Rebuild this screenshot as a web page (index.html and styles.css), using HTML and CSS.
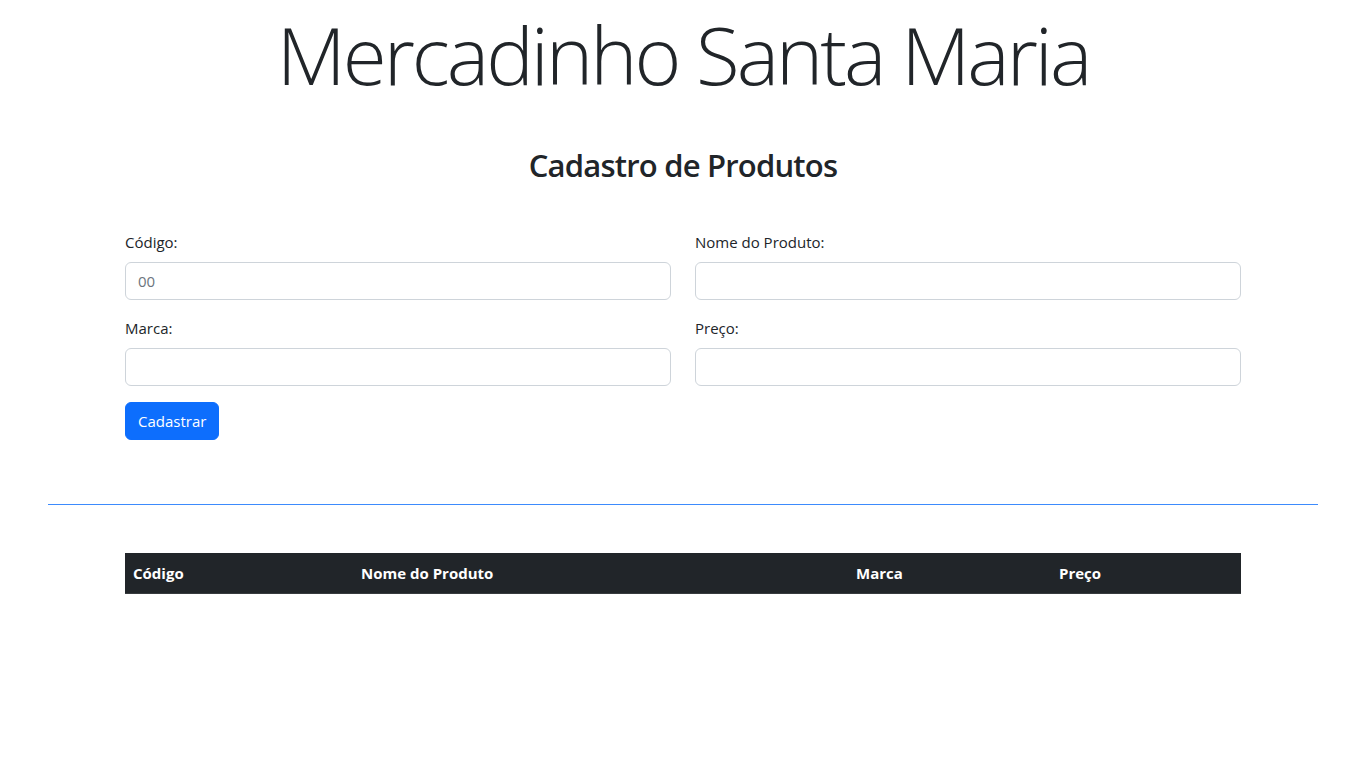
FILE: index.html
```html
<!DOCTYPE html>
<html lang="pt-br">
<head>
<meta charset="utf-8">
<title>Mercadinho Santa Maria</title>
<link rel="stylesheet" href="styles.css">
</head>
<body>
<header class="page-header">
  <h1 class="display-title">Mercadinho Santa Maria</h1>
</header>
<main class="container">
  <h2 class="section-title">Cadastro de Produtos</h2>
  <form class="product-form">
    <div class="form-row">
      <div class="field">
        <label class="field-label" for="codigo">Código:</label>
        <input class="field-input" id="codigo" type="text" placeholder="00">
      </div>
      <div class="field">
        <label class="field-label" for="nome">Nome do Produto:</label>
        <input class="field-input" id="nome" type="text">
      </div>
    </div>
    <div class="form-row">
      <div class="field">
        <label class="field-label" for="marca">Marca:</label>
        <input class="field-input" id="marca" type="text">
      </div>
      <div class="field">
        <label class="field-label" for="preco">Preço:</label>
        <input class="field-input" id="preco" type="text">
      </div>
    </div>
    <button class="btn-primary" type="button">Cadastrar</button>
  </form>
</main>
<div class="divider"></div>
<section class="container">
  <table class="product-table">
    <thead>
      <tr>
        <th class="col-code">Código</th>
        <th class="col-name">Nome do Produto</th>
        <th class="col-brand">Marca</th>
        <th class="col-price">Preço</th>
      </tr>
    </thead>
    <tbody></tbody>
  </table>
</section>
</body>
</html>
```
FILE: styles.css
```css
* { box-sizing: border-box; }
html, body { margin: 0; }
body {
  padding-left: 15px;
  font-family: "Open Sans", "Noto Sans", sans-serif;
  font-size: 15px;
  color: #212529;
  background: #fff;
}
.page-header { text-align: center; }
.display-title {
  margin: 0;
  padding-top: 6px;
  font-size: 80px;
  font-weight: 300;
  line-height: 96px;
  letter-spacing: -3px;
  color: #212529;
}
.container {
  width: 1116px;
  margin: 0 auto;
}
.section-title {
  margin: 44px 0 0;
  text-align: center;
  font-size: 31px;
  font-weight: 600;
  line-height: 38px;
  letter-spacing: -0.8px;
}
.product-form { margin-top: 46px; }
.form-row {
  display: flex;
  gap: 24px;
  margin-bottom: 16px;
}
.field { flex: 1; }
.field-label {
  display: block;
  margin-bottom: 8px;
  line-height: 24px;
}
.field-input {
  display: block;
  width: 100%;
  height: 38px;
  padding: 6px 12px;
  font: inherit;
  font-size: 15px;
  color: #212529;
  border: 1px solid #ced4da;
  border-radius: 6px;
  background: #fff;
}
.field-input::placeholder { color: #6c757d; }
.btn-primary {
  display: block;
  height: 38px;
  padding: 6px 12px;
  font: inherit;
  font-size: 15px;
  color: #fff;
  background: #0d6efd;
  border: 1px solid #0d6efd;
  border-radius: 6px;
}
.divider {
  width: 1270px;
  height: 1px;
  margin: 64px auto 48px;
  background: #3d8bfd;
}
.product-table {
  width: 100%;
  border-collapse: collapse;
}
.product-table th {
  padding: 8px;
  text-align: left;
  font-weight: 700;
  line-height: 24px;
  color: #fff;
  background: #212529;
  border-bottom: 1px solid #373b3e;
}
.col-code { width: 228px; }
.col-name { width: 495px; }
.col-brand { width: 203px; }
.col-price { width: 190px; }
```
